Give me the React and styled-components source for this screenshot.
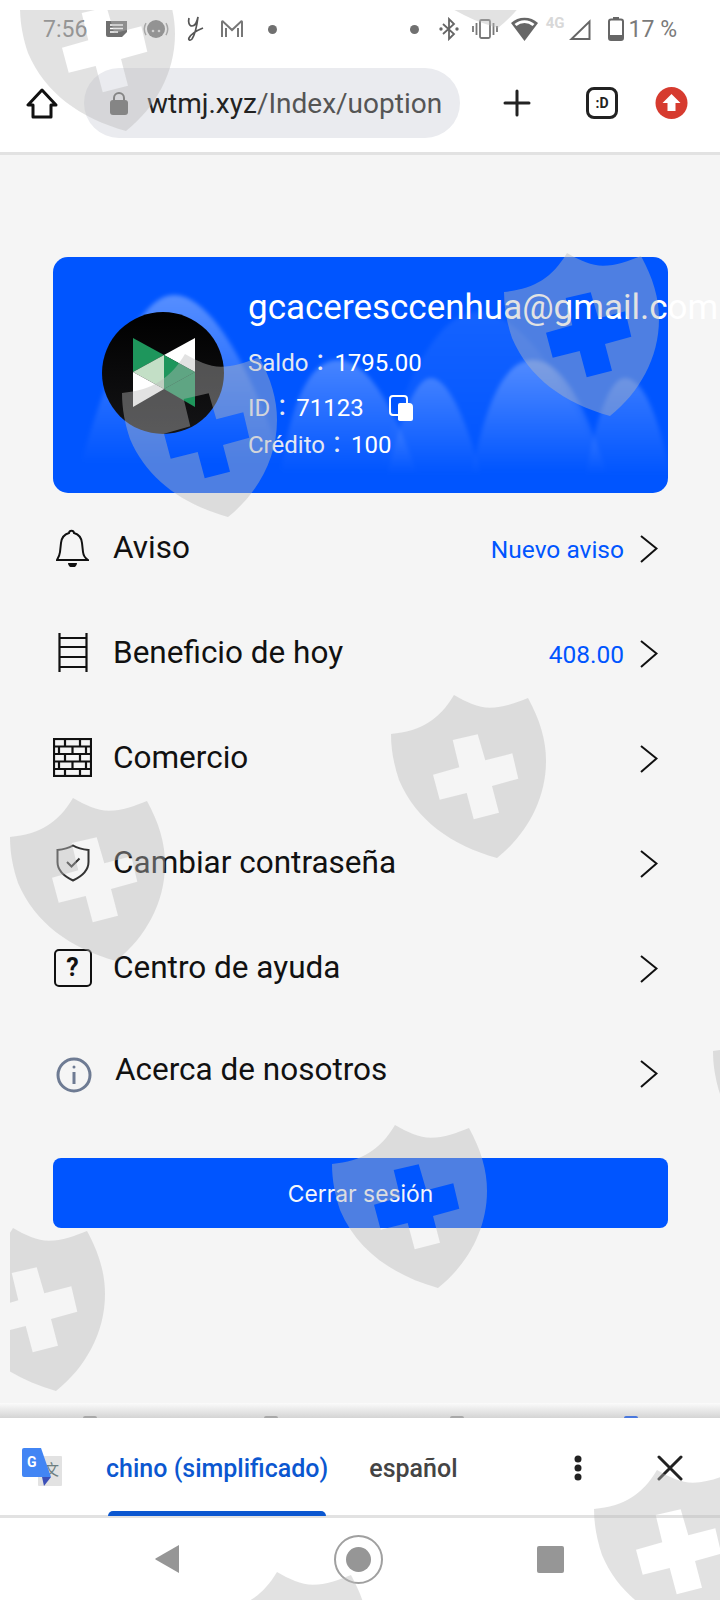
import React from "react";
import styled, { createGlobalStyle } from "styled-components";

const GlobalStyle = createGlobalStyle`
  html, body {
    margin: 0;
    padding: 0;
    background: #f5f5f5;
  }
  * {
    box-sizing: border-box;
  }
`;

const shieldSpots = [
  [10, -42],
  [382, -145],
  [494, 243],
  [112, 344],
  [381, 685],
  [0, 788],
  [703, 1002],
  [322, 1115],
  [-60, 1218],
  [584, 1460],
  [204, 1562],
];

const rows = [
  { label: "Aviso", note: "Nuevo aviso", icon: <BellIcon /> },
  { label: "Beneficio de hoy", note: "408.00", icon: <LadderIcon /> },
  { label: "Comercio", icon: <BrickIcon /> },
  { label: "Cambiar contraseña", icon: <GuardIcon /> },
  { label: "Centro de ayuda", icon: <HelpIcon /> },
  { label: "Acerca de nosotros", icon: <InfoIcon />, wide: true },
];

export default function App() {
  return (
    <>
      <GlobalStyle />
      <StyledPage>
        <StyledHeader>
          <StyledStatusBar>
            <StyledStatusGroup $gap={15.5}>
              <StyledClock>7:56</StyledClock>
              <NewsIcon />
              <FaceIcon />
              <ScriptIcon />
              <MailIcon />
              <StyledDot $left={8} />
            </StyledStatusGroup>
            <StyledStatusGroup $gap={13}>
              <StyledDot $right={7} />
              <BluetoothIcon />
              <VibrateIcon />
              <WifiIcon />
              <StyledNetwork>4G</StyledNetwork>
              <SignalIcon />
              <StyledIconSlot $left={4}>
                <BatteryIcon />
              </StyledIconSlot>
              <StyledBatteryText>17 %</StyledBatteryText>
            </StyledStatusGroup>
          </StyledStatusBar>
          <StyledToolbar>
            <HomeIcon />
            <StyledAddress>
              <LockIcon />
              <StyledUrl>
                wtmj.xyz<StyledUrlPath>/Index/uoption</StyledUrlPath>
              </StyledUrl>
            </StyledAddress>
            <StyledIconSlot $left={43}>
              <PlusIcon />
            </StyledIconSlot>
            <StyledTabCount>:D</StyledTabCount>
            <UpdateIcon />
          </StyledToolbar>
        </StyledHeader>

        <StyledMain>
          <StyledCard>
            <CardHills />
            <StyledAvatar>
              <LogoMark />
            </StyledAvatar>
            <StyledAccount>
              <StyledEmail>gcaceresccenhua@gmail.com</StyledEmail>
              <StyledAccountLine>
                Saldo：<StyledValue>1795.00</StyledValue>
              </StyledAccountLine>
              <StyledAccountLine $spaced>
                ID：<StyledValue>71123</StyledValue>
                <CopyIcon />
              </StyledAccountLine>
              <StyledAccountLine>
                Crédito：<StyledValue>100</StyledValue>
              </StyledAccountLine>
            </StyledAccount>
          </StyledCard>

          <StyledMenu>
            {rows.map((row) => (
              <StyledRow key={row.label}>
                <StyledRowIcon $wide={row.wide}>{row.icon}</StyledRowIcon>
                <StyledRowLabel $raised={row.wide}>{row.label}</StyledRowLabel>
                {row.note && <StyledRowNote>{row.note}</StyledRowNote>}
                <ChevronIcon />
              </StyledRow>
            ))}
          </StyledMenu>

          <StyledLogout>Cerrar sesión</StyledLogout>
        </StyledMain>

        <StyledShadowBand>
          <StyledPeek $left={83} />
          <StyledPeek $left={167} />
          <StyledPeek $left={172} />
          <StyledPeek $left={160} $blue />
        </StyledShadowBand>

        <StyledTranslateBar>
          <TranslateIcon />
          <StyledLanguage $active>
            chino (simplificado)
            <StyledIndicator />
          </StyledLanguage>
          <StyledLanguage>español</StyledLanguage>
          <DotsIcon />
          <CloseIcon />
        </StyledTranslateBar>

        <StyledSystemNav>
          <svg width="26" height="30" viewBox="0 0 26 30">
            <path d="M25 1v28L1.500 15.500a.7.7 0 0 1 0-1z" fill="#969696" />
          </svg>
          <StyledHomeRing>
            <StyledHomeDot />
          </StyledHomeRing>
          <StyledRecents />
        </StyledSystemNav>

        <StyledWatermark>
          {shieldSpots.map(([x, y]) => (
            <StyledShield key={`${x}-${y}`} $x={x} $y={y} viewBox="0 0 156 164">
              <path
                fillRule="evenodd"
                d="M63 0C75 7 87 12.7 99 12.7C112 12.7 125 8 137 3C149 25 155 45 155 66C155 105 135 140 106 163C60 150 25 125 8 85C3 70 0 55 0 39C30 36 48 25 63 0ZM61.7 45L86.7 39.3L94.3 65.3L121.3 58.3L127.3 83.7L101 91L108 117.7L82.7 124.3L75.7 98L48.7 104.7L42 79.7L68.3 72.3Z"
              />
            </StyledShield>
          ))}
        </StyledWatermark>
      </StyledPage>
    </>
  );
}

function NewsIcon() {
  return (
    <svg width="23" height="18" viewBox="0 0 23 18">
      <path d="M1 1h21v11l-5 5H3a2 2 0 0 1-2-2z" fill="#6f6f6f" />
      <path d="M5 5h13M5 8.500h13M5 12h8" stroke="#fff" strokeWidth="1.600" />
    </svg>
  );
}

function FaceIcon() {
  return (
    <svg width="26" height="24" viewBox="0 0 26 24">
      <circle cx="13" cy="12" r="9" fill="#777" />
      <path d="M3 6a12 12 0 0 0 0 12M23 6a12 12 0 0 1 0 12" stroke="#999" strokeWidth="1.500" fill="none" />
      <circle cx="10" cy="14" r="1.300" fill="#ddd" />
      <circle cx="16" cy="14" r="1.300" fill="#ddd" />
    </svg>
  );
}

function ScriptIcon() {
  return (
    <svg width="20" height="26" viewBox="0 0 20 26" fill="none" stroke="#555" strokeWidth="1.700">
      <path d="M4 2c-1 4 0 8 3 8s5-4 6-9c-1 8-2 16-6 22-2 2-4 1-3-1 2-4 9-8 14-10" />
    </svg>
  );
}

function MailIcon() {
  return (
    <svg width="24" height="20" viewBox="0 0 24 20" fill="none" stroke="#777" strokeWidth="2">
      <path d="M2 18V3q0-1 1-.5L12 11l9-8.500q1-.5 1 .5v15M6 18V9M18 18V9" />
    </svg>
  );
}

function BluetoothIcon() {
  return (
    <svg width="20" height="24" viewBox="0 0 20 24" fill="none" stroke="#666" strokeWidth="1.800">
      <path d="M4 7l11 10-5 5V2l5 5L4 17" />
      <circle cx="2" cy="12" r=".8" fill="#666" />
      <circle cx="18" cy="12" r=".8" fill="#666" />
    </svg>
  );
}

function VibrateIcon() {
  return (
    <svg width="26" height="22" viewBox="0 0 26 22" fill="none" stroke="#777" strokeWidth="1.800">
      <rect x="8" y="2" width="10" height="18" rx="1.500" />
      <path d="M4.500 5v12M21.500 5v12M1 8v6M25 8v6" />
    </svg>
  );
}

function WifiIcon() {
  return (
    <svg width="27" height="24" viewBox="0 0 27 24">
      <path d="M0 6a20 20 0 0 1 27 0L13.500 24z" fill="#666" />
      <path d="M3.500 7a15 15 0 0 1 20 0L21.500 9a12 12 0 0 0-16 0z" fill="#fff" />
    </svg>
  );
}

function SignalIcon() {
  return (
    <svg width="22" height="21" viewBox="0 0 22 21" fill="none" stroke="#666" strokeWidth="2">
      <path d="M20.500 2.500V20H2.500z" />
    </svg>
  );
}

function BatteryIcon() {
  return (
    <svg width="16" height="24" viewBox="0 0 16 24">
      <rect x="5" y="0" width="6" height="3" fill="#666" />
      <rect x="1" y="2.500" width="14" height="20.500" rx="2" fill="none" stroke="#666" strokeWidth="2" />
      <rect x="1" y="18" width="14" height="5" rx="1" fill="#666" />
    </svg>
  );
}

function HomeIcon() {
  return (
    <svg width="32" height="31" viewBox="0 0 32 31" fill="none" stroke="#111" strokeWidth="3" strokeLinejoin="round">
      <path d="M16 2L2 17h5v12h18V17h5z" />
    </svg>
  );
}

function LockIcon() {
  return (
    <svg width="18" height="24" viewBox="0 0 18 24">
      <path d="M4 10V7a5 5 0 0 1 10 0v3" fill="none" stroke="#5f5f5f" strokeWidth="2" />
      <rect y="9" width="18" height="15" rx="3" fill="#5f5f5f" />
    </svg>
  );
}

function PlusIcon() {
  return (
    <svg width="28" height="28" viewBox="0 0 28 28" stroke="#222" strokeWidth="3" strokeLinecap="round">
      <path d="M14 2v24M2 14h24" />
    </svg>
  );
}

function UpdateIcon() {
  return (
    <svg width="33" height="32" viewBox="0 0 33 32">
      <circle cx="16.500" cy="16" r="16" fill="#d63b2f" />
      <path d="M16.500 7l9 9h-5v8h-8v-8h-5z" fill="#fff" />
    </svg>
  );
}

function CardHills() {
  const hills = [
    ["M20 236C50 120 85 38 121 38C165 38 210 140 240 236Z", 0.34],
    ["M225 236C235 150 255 103 285 103C320 103 350 170 370 236Z", 0.28],
    ["M330 236C345 170 360 121 378 121C398 121 420 180 432 236Z", 0.22],
    ["M320 236C350 120 385 55 425 55C470 55 520 130 560 236Z", 0.08],
    ["M415 236C430 150 450 103 480 103C515 103 540 170 560 236Z", 0.28],
    ["M530 236C540 170 555 121 572 121C592 121 610 170 620 236Z", 0.22],
  ];
  return (
    <StyledCardArt viewBox="0 0 615 236" preserveAspectRatio="none">
      <defs>
        <linearGradient id="hill" x1="0" y1="0" x2="0" y2="1">
          <stop offset="0" stopColor="#fff" stopOpacity="1" />
          <stop offset="0.85" stopColor="#fff" stopOpacity="0" />
        </linearGradient>
        <filter id="soft" x="-10%" y="-10%" width="120%" height="120%">
          <feGaussianBlur stdDeviation="2" />
        </filter>
      </defs>
      <g filter="url(#soft)">
        {hills.map(([d, opacity]) => (
          <path key={d} d={d} fill="url(#hill)" opacity={opacity} />
        ))}
      </g>
    </StyledCardArt>
  );
}

function LogoMark() {
  return (
    <svg width="62" height="70" viewBox="0 0 62 70">
      <path d="M0 0L31 17L0 34z" fill="#1e965c" />
      <path d="M62 0L31 17L62 34z" fill="#fff" />
      <path d="M0 34L31 17V51z" fill="#c3dfc6" />
      <path d="M62 34L31 17V51z" fill="#1e965c" />
      <path d="M0 34L31 51L0 69z" fill="#fff" />
      <path d="M62 34L31 51L62 69z" fill="#1e965c" />
    </svg>
  );
}

function CopyIcon() {
  return (
    <StyledCopy width="25" height="26" viewBox="0 0 25 26">
      <rect x="1" y="1" width="17" height="19" rx="3" fill="none" stroke="#fff" strokeWidth="2" />
      <path d="M9 23.500V10a2 2 0 0 1 2-2h9a4 4 0 0 1 4 4v12a2 2 0 0 1-2 2H11a2 2 0 0 1-2-2.500z" fill="#fff" />
    </StyledCopy>
  );
}

function BellIcon() {
  return (
    <svg width="33" height="39" viewBox="0 0 33 39" fill="none" stroke="#111" strokeWidth="2">
      <path d="M1 32h31c-3-2-4.500-4-5-8l-1-9c-.6-6-4.500-9-8-10-.4-3-4.600-3-5 0-3.500 1-7.400 4-8 10l-1 9c-.5 4-2 6-3 8z" />
      <path d="M12 35h9a4.500 4.500 0 0 1-9 0z" fill="#111" stroke="none" />
    </svg>
  );
}

function LadderIcon() {
  return (
    <svg width="30" height="39" viewBox="0 0 30 39" fill="none" stroke="#111">
      <path d="M1.500 0v39M28.500 0v39" strokeWidth="2.200" />
      <path d="M1 5h28M1 14h28M1 24h28M1 34h28" strokeWidth="2" />
    </svg>
  );
}

function BrickIcon() {
  return (
    <svg width="39" height="39" viewBox="0 0 39 39" fill="none" stroke="#111" strokeWidth="2.200">
      <rect x="1" y="1" width="37" height="37" />
      <path d="M1 8.500h37M1 16h37M1 23.500h37M1 31h37" />
      <path d="M12 1v7.500M27 1v7.500M6 8.500V16M19.500 8.500V16M33 8.500V16M12 16v7.500M27 16v7.500M6 23.500V31M19.500 23.500V31M33 23.500V31M12 31v7M27 31v7" />
    </svg>
  );
}

function GuardIcon() {
  return (
    <svg width="34" height="38" viewBox="0 0 34 38" fill="none" stroke="#333" strokeWidth="2">
      <path d="M17 1.500c5 3 10 4 15.500 4.500v12c0 8-6 14-15.500 18.500C7.500 32 1.500 26 1.500 18V6C7 5.500 12 4.500 17 1.500z" />
      <path d="M11 18l4.500 4.500L23.500 14.500" />
    </svg>
  );
}

function HelpIcon() {
  return <StyledHelpBox>?</StyledHelpBox>;
}

function InfoIcon() {
  return (
    <StyledInfo width="36" height="36" viewBox="0 0 36 36" fill="none" stroke="#6e7b93" strokeWidth="3">
      <circle cx="18" cy="18" r="16" />
      <path d="M18 15v12" />
      <circle cx="18" cy="10" r="1.500" fill="#6e7b93" stroke="none" />
    </StyledInfo>
  );
}

function ChevronIcon() {
  return (
    <StyledChevron width="18" height="32" viewBox="0 0 18 32" fill="none" stroke="#111" strokeWidth="2">
      <path d="M1 3l15.500 12.500L1 29" />
    </StyledChevron>
  );
}

function TranslateIcon() {
  return (
    <svg width="40" height="40" viewBox="0 0 40 40">
      <rect x="16" y="8" width="24" height="30" rx="1" fill="#e2e2e2" />
      <text x="22" y="27" fontFamily="'Noto Sans CJK SC', sans-serif" fontSize="15" fill="#6d7f80">文</text>
      <path d="M2 0h17l10 29H2a2 2 0 0 1-2-2V2a2 2 0 0 1 2-2z" fill="#4285f4" />
      <path d="M20 29h9l-7 9z" fill="#3b4fb8" />
      <text x="5" y="19" fontFamily="Roboto, sans-serif" fontSize="14" fontWeight="700" fill="#fff">G</text>
    </svg>
  );
}

function DotsIcon() {
  return (
    <StyledDots width="8" height="26" viewBox="0 0 8 26" fill="#222">
      <circle cx="4" cy="4" r="3.500" />
      <circle cx="4" cy="13" r="3.500" />
      <circle cx="4" cy="22" r="3.500" />
    </StyledDots>
  );
}

function CloseIcon() {
  return (
    <StyledClose width="26" height="26" viewBox="0 0 26 26" stroke="#222" strokeWidth="3" strokeLinecap="round">
      <path d="M2 2l22 22M24 2L2 24" />
    </StyledClose>
  );
}

const StyledPage = styled.div`
  position: relative;
  display: flex;
  flex-direction: column;
  width: 720px;
  height: 1600px;
  overflow: hidden;
  background: #fff;
  font-family: Roboto, "Noto Sans CJK SC", sans-serif;
`;

const StyledHeader = styled.header`
  height: 155px;
  background: #fff;
  border-bottom: 3px solid #e2e2e2;
`;

const StyledStatusBar = styled.div`
  display: flex;
  justify-content: space-between;
  align-items: center;
  height: 58px;
  padding: 0 43px;
`;

const StyledStatusGroup = styled.div`
  display: flex;
  align-items: center;
  gap: ${({ $gap }) => $gap}px;
`;

const StyledClock = styled.span`
  margin-right: 2px;
  font-size: 23px;
  color: #7a7a7a;
`;

const StyledBatteryText = styled.span`
  margin-left: -8px;
  font-size: 23px;
  color: #7a7a7a;
`;

const StyledDot = styled.span`
  width: 9px;
  height: 9px;
  margin-left: ${({ $left }) => $left || 0}px;
  margin-right: ${({ $right }) => $right || 0}px;
  border-radius: 50%;
  background: #707070;
`;

const StyledNetwork = styled.span`
  margin: -12px -9px 0 -5px;
  font-size: 15px;
  font-weight: 700;
  color: #d8d8d8;
`;

const StyledIconSlot = styled.span`
  display: flex;
  margin-left: ${({ $left }) => $left}px;
`;

const StyledToolbar = styled.div`
  display: flex;
  align-items: center;
  height: 90px;
  padding: 0 32px 0 26px;
`;

const StyledAddress = styled.div`
  display: flex;
  align-items: center;
  gap: 19px;
  width: 376px;
  height: 70px;
  margin-left: 26px;
  padding-left: 26px;
  border-radius: 35px;
  background: #eaebef;
`;

const StyledUrl = styled.span`
  font-size: 28px;
  color: #222;
  white-space: nowrap;
`;

const StyledUrlPath = styled.span`
  color: #555;
`;

const StyledTabCount = styled.span`
  display: flex;
  align-items: center;
  justify-content: center;
  width: 32px;
  height: 32px;
  margin: 0 37px 0 55px;
  border: 3px solid #222;
  border-radius: 8px;
  font-size: 14px;
  font-weight: 700;
  color: #222;
`;

const StyledMain = styled.main`
  display: flex;
  flex-direction: column;
  height: 1248px;
  padding: 102px 52px 0 53px;
  background: #f5f5f5;
`;

const StyledCard = styled.section`
  position: relative;
  display: flex;
  align-items: center;
  flex-shrink: 0;
  height: 236px;
  padding: 0 0 4px 49px;
  border-radius: 15px;
  background: #0055ff;
`;

const StyledCardArt = styled.svg`
  position: absolute;
  inset: 0;
  width: 100%;
  height: 100%;
  border-radius: 15px;
`;

const StyledAvatar = styled.div`
  position: relative;
  display: flex;
  align-items: center;
  justify-content: center;
  flex-shrink: 0;
  width: 122px;
  height: 122px;
  padding-left: 2px;
  border-radius: 50%;
  background: linear-gradient(#000, #141416);
`;

const StyledAccount = styled.div`
  position: relative;
  display: flex;
  flex-direction: column;
  align-self: flex-start;
  margin: 28px 0 0 24px;
  white-space: nowrap;
`;

const StyledEmail = styled.div`
  margin-bottom: 14px;
  font-size: 35px;
  line-height: 46px;
  color: #fff;
`;

const StyledAccountLine = styled.div`
  height: 37px;
  margin-top: ${({ $spaced }) => ($spaced ? "8px" : "0")};
  font-family: Roboto, "Noto Sans CJK TC", sans-serif;
  font-size: 24px;
  line-height: 37px;
  color: #e4e8f2;
`;

const StyledValue = styled.span`
  margin-left: 2px;
  color: #fff;
`;

const StyledCopy = styled.svg`
  margin-left: 25px;
  vertical-align: -5px;
`;

const StyledMenu = styled.ul`
  display: flex;
  flex-direction: column;
  margin: 2px 0 0;
  padding: 0;
  list-style: none;
`;

const StyledRow = styled.li`
  display: flex;
  align-items: center;
  height: 105px;
  padding-right: 10px;
`;

const StyledRowIcon = styled.span`
  display: flex;
  justify-content: center;
  flex-shrink: 0;
  width: ${({ $wide }) => ($wide ? "62px" : "60px")};
  padding-right: 21px;
`;

const StyledRowLabel = styled.span`
  flex: 1;
  margin-bottom: ${({ $raised }) => ($raised ? "6px" : "0")};
  font-size: 31.5px;
  color: #111;
`;

const StyledRowNote = styled.span`
  margin: 4px 16px 0 0;
  font-size: 24.500px;
  color: #0055ff;
`;

const StyledChevron = styled.svg`
  flex-shrink: 0;
  margin-top: 2px;
`;

const StyledHelpBox = styled.span`
  display: flex;
  align-items: center;
  justify-content: center;
  flex-shrink: 0;
  width: 38px;
  height: 38px;
  border: 2px solid #111;
  border-radius: 5px;
  font-size: 25px;
  font-weight: 700;
  color: #111;
`;

const StyledInfo = styled.svg`
  margin-top: 4px;
`;

const StyledLogout = styled.button`
  height: 70px;
  margin-top: 33px;
  border: none;
  border-radius: 8px;
  background: #0055ff;
  font-family: Inter, sans-serif;
  font-size: 22.800px;
  color: #f4f6fb;
`;

const StyledShadowBand = styled.div`
  display: flex;
  align-items: flex-end;
  height: 15px;
  background: linear-gradient(#fbfbfb, #d4d4d4);
`;

const StyledPeek = styled.span`
  width: 14px;
  height: 2px;
  margin-left: ${({ $left }) => $left}px;
  border-radius: 7px 7px 0 0;
  background: ${({ $blue }) => ($blue ? "#4a78dd" : "#a8a8a8")};
`;

const StyledTranslateBar = styled.div`
  display: flex;
  align-items: center;
  height: 100px;
  padding: 2px 37px 0 22px;
  background: #fff;
  border-bottom: 3px solid #e2e2e2;
`;

const StyledLanguage = styled.span`
  position: relative;
  margin: 2px 0 0 ${({ $active }) => ($active ? "44px" : "41px")};
  font-size: 25px;
  font-weight: 500;
  white-space: nowrap;
  color: ${({ $active }) => ($active ? "#0b57d0" : "#444")};
`;

const StyledIndicator = styled.span`
  position: absolute;
  left: 2px;
  right: 2px;
  bottom: -33px;
  height: 5px;
  border-radius: 5px 5px 0 0;
  background: #0b57d0;
`;

const StyledDots = styled.svg`
  margin-left: auto;
`;

const StyledClose = styled.svg`
  margin-left: 75px;
`;

const StyledSystemNav = styled.nav`
  display: flex;
  align-items: center;
  flex: 1;
  padding: 0 0 0 154px;
  gap: 154px;
  background: #fff;
`;

const StyledHomeRing = styled.span`
  display: flex;
  align-items: center;
  justify-content: center;
  width: 49px;
  height: 49px;
  border: 2px solid #a0a0a0;
  border-radius: 50%;
`;

const StyledHomeDot = styled.span`
  width: 25px;
  height: 25px;
  border-radius: 50%;
  background: #969696;
`;

const StyledRecents = styled.span`
  width: 27px;
  height: 27px;
  border-radius: 2px;
  background: #969696;
`;

const StyledWatermark = styled.div`
  position: absolute;
  inset: 10px 0 0 10px;
  overflow: hidden;
  pointer-events: none;
`;

const StyledShield = styled.svg`
  position: absolute;
  left: ${({ $x }) => $x}px;
  top: ${({ $y }) => $y}px;
  width: 156px;
  height: 164px;
  fill: rgba(185, 185, 185, 0.42);
`;
